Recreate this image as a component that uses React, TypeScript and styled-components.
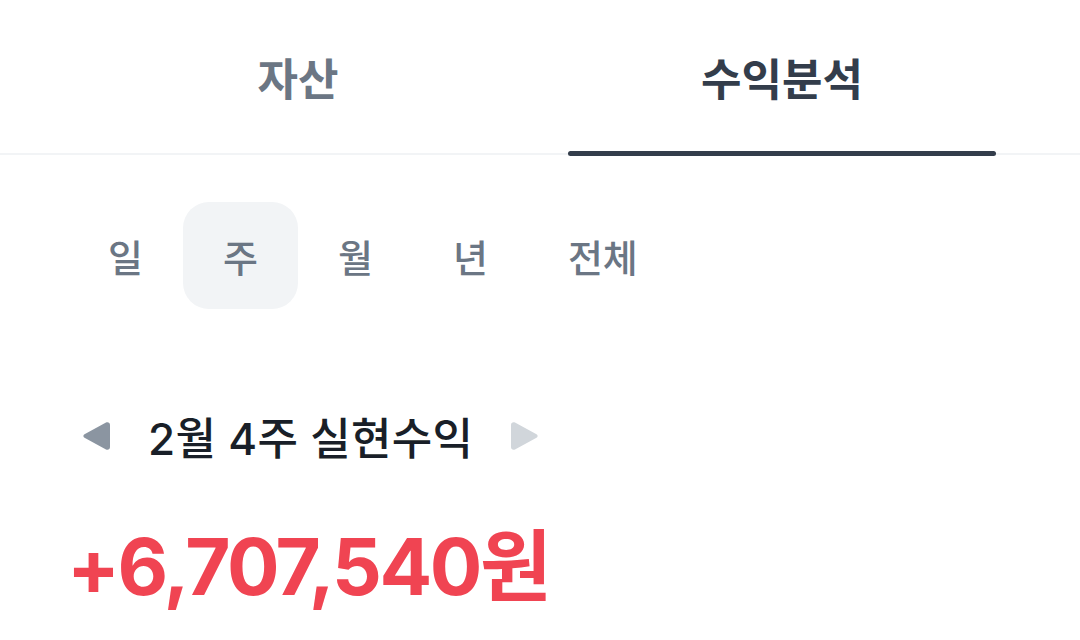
import styled, { createGlobalStyle } from 'styled-components';

const GlobalStyle = createGlobalStyle`
  html, body {
    margin: 0;
    padding: 0;
    background: #ffffff;
  }
  body {
    font-family: Inter, 'Noto Sans CJK KR', sans-serif;
  }
`;

const tabs = ['자산', '수익분석'];
const periods = ['일', '주', '월', '년', '전체'];

const App = () => {
  return (
    <>
      <GlobalStyle />
      <Page>
        <TabBar>
          {tabs.map((tab, index) => (
            <Tab key={tab} active={index === 1}>
              {tab}
            </Tab>
          ))}
        </TabBar>
        <PeriodRow>
          {periods.map((period, index) => (
            <PeriodChip key={period} selected={index === 1}>
              {period}
            </PeriodChip>
          ))}
        </PeriodRow>
        <RangeRow>
          <ArrowButton aria-label="이전">
            <svg width="32" height="32" viewBox="0 0 32 32">
              <path
                d="M4.5 14.3 L26 2.6 C28 1.6 30 2.8 30 5 V27 C30 29.2 28 30.4 26 29.4 L4.5 17.7 C3 16.9 3 15.1 4.5 14.3 Z"
                fill="#8b95a1"
              />
            </svg>
          </ArrowButton>
          <RangeTitle>2월 4주 실현수익</RangeTitle>
          <ArrowButton aria-label="다음">
            <svg width="32" height="32" viewBox="0 0 32 32">
              <path
                d="M27.5 14.3 L6 2.6 C4 1.6 2 2.8 2 5 V27 C2 29.2 4 30.4 6 29.4 L27.5 17.7 C29 16.9 29 15.1 27.5 14.3 Z"
                fill="#d1d6db"
              />
            </svg>
          </ArrowButton>
        </RangeRow>
        <Amount>+6,707,540원</Amount>
      </Page>
    </>
  );
};

export default App;

const Page = styled.div`
  width: 1080px;
  height: 640px;
  overflow: hidden;
  background: #ffffff;
`;

const TabBar = styled.div`
  display: flex;
  padding: 0 56px;
  border-bottom: 2px solid #f2f4f6;
`;

const Tab = styled.div<{ active?: boolean }>`
  flex: 1;
  height: 153px;
  display: flex;
  align-items: center;
  justify-content: center;
  position: relative;
  font-size: 44px;
  font-weight: 700;
  color: ${({ active }) => (active ? '#333d4b' : '#6b7684')};
  &::after {
    content: '';
    display: ${({ active }) => (active ? 'block' : 'none')};
    position: absolute;
    left: 28px;
    right: 28px;
    bottom: -3px;
    height: 5px;
    border-radius: 3px;
    background: #333d4b;
  }
`;

const PeriodRow = styled.div`
  display: flex;
  margin-top: 47px;
  padding-left: 68px;
`;

const PeriodChip = styled.div<{ selected?: boolean }>`
  height: 107px;
  padding: 0 40px;
  display: flex;
  align-items: center;
  justify-content: center;
  border-radius: 26px;
  font-size: 38px;
  font-weight: 500;
  color: #6b7684;
  background: ${({ selected }) => (selected ? '#f2f4f6' : 'transparent')};
`;

const RangeRow = styled.div`
  display: flex;
  align-items: center;
  gap: 36px;
  margin-top: 97px;
  padding-left: 80px;
  height: 60px;
`;

const ArrowButton = styled.div`
  width: 32px;
  height: 32px;
  display: flex;
  svg {
    display: block;
  }
`;

const RangeTitle = styled.div`
  font-size: 44px;
  font-weight: 500;
  letter-spacing: 0.3px;
  color: #191f28;
`;

const Amount = styled.div`
  margin-top: 51px;
  padding-left: 67px;
  height: 100px;
  line-height: 100px;
  font-size: 78px;
  font-weight: 700;
  letter-spacing: -2.4px;
  color: #f04452;
`;
